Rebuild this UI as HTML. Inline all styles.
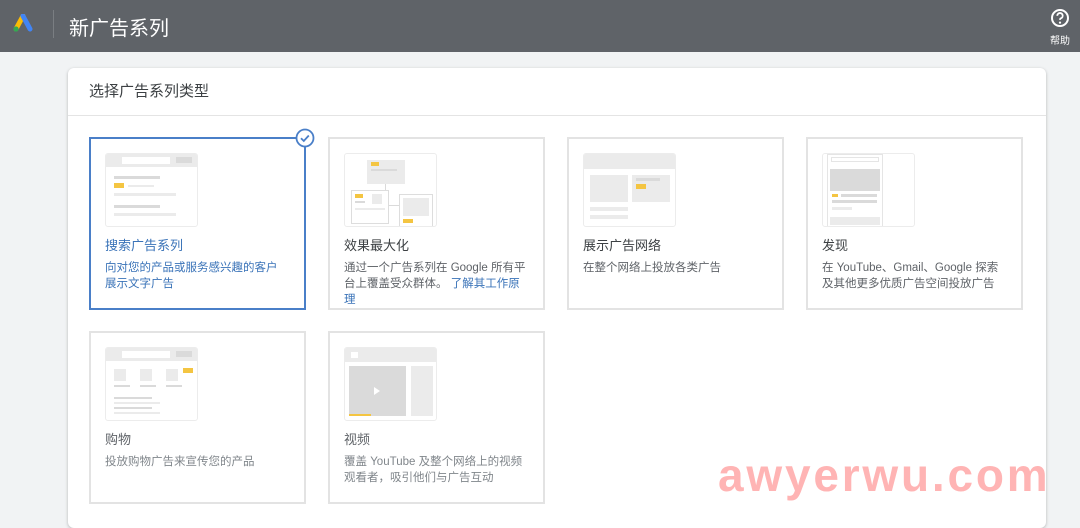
<!DOCTYPE html>
<html><head><meta charset="utf-8"><style>
*{margin:0;padding:0;box-sizing:border-box}
body{width:1080px;height:510px;overflow:hidden;background:#f1f3f4;font-family:"Liberation Sans","Noto Sans CJK SC",sans-serif;position:relative}
.hdr{position:absolute;left:0;top:0;width:1080px;height:52px;background:#5f6368}
.hdr .sep{position:absolute;left:53px;top:10px;width:1px;height:28px;background:#7a7e82}
.hdr .t{position:absolute;left:69px;top:12px;font-size:20px;color:#fff}
.help{position:absolute;left:1049px;top:8px;width:22px;text-align:center;color:#fff;font-size:10px}
.main{position:absolute;left:68px;top:68px;width:978px;height:460px;background:#fff;border-radius:6px;box-shadow:0 1px 3px rgba(0,0,0,.25)}
.main .h{position:absolute;left:21px;top:12px;font-size:15px;color:#3c4043}
.main .div{position:absolute;left:0;top:47px;width:100%;height:1px;background:#e4e4e4}
.c{position:absolute;width:217px;height:173px;border:2px solid #e3e3e3;background:#fff}
.c.sel{border-color:#4a7fc8}
.pv{position:absolute;left:14px;top:14px;width:93px;height:74px;border:1px solid #ececec;border-radius:3px;background:#fff;overflow:hidden}
.pv div{position:absolute}
.ct{position:absolute;left:14px;top:96px;font-size:13px;color:#3c4043}
.cd{position:absolute;left:14px;top:121px;width:182px;font-size:11.5px;line-height:16px;color:#5f6368}
.g{background:#dadada}.l{background:#ebebeb}.y{background:#f4c542}
.wm{position:absolute;left:718px;top:448px;font-size:46px;font-weight:bold;color:#ffb0b0;letter-spacing:2.8px;opacity:.95}
</style></head><body>
<div class="hdr">
<svg style="position:absolute;left:12px;top:14px" width="22" height="20" viewBox="0 0 22 20"><path d="M11 2 L4 15" stroke="#fbbc04" stroke-width="5" stroke-linecap="round"/><path d="M11 2 L18 15" stroke="#4285f4" stroke-width="5" stroke-linecap="round"/><circle cx="4" cy="15" r="2.6" fill="#34a853"/></svg>
<div class="sep"></div><div class="t">新广告系列</div>
<div class="help"><svg width="20" height="20" viewBox="0 0 20 20"><circle cx="10" cy="10" r="8" fill="none" stroke="#fff" stroke-width="2"/><path d="M7.3 7.8a2.7 2.7 0 1 1 3.6 2.5c-.7.3-.9.8-.9 1.6" fill="none" stroke="#fff" stroke-width="1.8"/><circle cx="10" cy="14.6" r="1.1" fill="#fff"/></svg><div style="margin-top:1px">帮助</div></div>
</div>
<div class="main"><div class="h">选择广告系列类型</div><div class="div"></div></div>

<div class="c sel" style="left:89px;top:137px">
<div class="pv"><div class="l" style="left:0;top:0;width:93px;height:13px"></div><div style="left:16px;top:3px;width:48px;height:7px;background:#fff"></div><div class="g" style="left:70px;top:3px;width:16px;height:6px"></div>
<div class="g" style="left:8px;top:22px;width:46px;height:3px"></div><div class="y" style="left:8px;top:29px;width:10px;height:5px"></div><div class="l" style="left:22px;top:31px;width:26px;height:2px"></div><div class="l" style="left:8px;top:39px;width:62px;height:3px"></div><div class="g" style="left:8px;top:51px;width:46px;height:3px"></div><div class="l" style="left:8px;top:59px;width:62px;height:3px"></div></div>
<div class="ct" style="color:#3a73b8">搜索广告系列</div>
<div class="cd" style="color:#3a73b8">向对您的产品或服务感兴趣的客户展示文字广告</div>
</div>
<svg style="position:absolute;left:295px;top:128px" width="20" height="20" viewBox="0 0 20 20"><circle cx="10" cy="10" r="8.5" fill="#fff" stroke="#4a7fc8" stroke-width="1.8"/><path d="M6 10.2l2.8 2.8 5-5.5" fill="none" stroke="#4a7fc8" stroke-width="1.8"/></svg>

<div class="c" style="left:328px;top:137px">
<div class="pv"><div class="l" style="left:22px;top:6px;width:38px;height:24px"></div><div class="y" style="left:26px;top:8px;width:8px;height:4px"></div><div class="g" style="left:26px;top:15px;width:26px;height:2px"></div><div class="g" style="left:40px;top:30px;width:1px;height:6px"></div>
<div style="left:6px;top:36px;width:38px;height:34px;border:1px solid #ddd"></div><div class="y" style="left:10px;top:40px;width:8px;height:4px"></div><div class="g" style="left:10px;top:47px;width:10px;height:2px"></div><div class="l" style="left:27px;top:40px;width:10px;height:10px"></div><div class="l" style="left:10px;top:54px;width:30px;height:2px"></div>
<div style="left:54px;top:40px;width:34px;height:34px;border:1px solid #ddd"></div><div class="l" style="left:58px;top:44px;width:26px;height:18px"></div><div class="y" style="left:58px;top:65px;width:10px;height:4px"></div><div class="g" style="left:44px;top:51px;width:10px;height:1px"></div></div>
<div class="ct">效果最大化</div>
<div class="cd">通过一个广告系列在 Google 所有平台上覆盖受众群体。 <span style="color:#3a73b8">了解其工作原理</span></div>
</div>

<div class="c" style="left:567px;top:137px">
<div class="pv"><div class="l" style="left:0;top:0;width:93px;height:15px"></div><div class="l" style="left:6px;top:21px;width:38px;height:27px"></div><div class="l" style="left:48px;top:21px;width:38px;height:27px"></div><div class="g" style="left:52px;top:24px;width:24px;height:3px"></div><div class="y" style="left:52px;top:30px;width:10px;height:5px"></div><div class="l" style="left:6px;top:53px;width:38px;height:4px"></div><div class="l" style="left:6px;top:61px;width:38px;height:4px"></div></div>
<div class="ct">展示广告网络</div>
<div class="cd">在整个网络上投放各类广告</div>
</div>

<div class="c" style="left:806px;top:137px">
<div class="pv"><div style="left:4px;top:0;width:56px;height:74px;border:1px solid #e5e5e5"></div><div style="left:8px;top:3px;width:48px;height:5px;border:1px solid #e5e5e5"></div><div class="g" style="left:7px;top:15px;width:50px;height:22px"></div><div class="y" style="left:9px;top:40px;width:6px;height:3px"></div><div class="g" style="left:18px;top:40px;width:36px;height:3px"></div><div class="g" style="left:9px;top:46px;width:45px;height:3px"></div><div class="l" style="left:9px;top:53px;width:20px;height:3px"></div><div class="l" style="left:7px;top:63px;width:50px;height:8px"></div></div>
<div class="ct">发现</div>
<div class="cd">在 YouTube、Gmail、Google 探索及其他更多优质广告空间投放广告</div>
</div>

<div class="c" style="left:89px;top:331px">
<div class="pv"><div class="l" style="left:0;top:0;width:93px;height:13px"></div><div style="left:16px;top:3px;width:48px;height:7px;background:#fff"></div><div class="g" style="left:70px;top:3px;width:16px;height:6px"></div>
<div class="y" style="left:77px;top:20px;width:10px;height:5px"></div><div class="l" style="left:8px;top:21px;width:12px;height:12px"></div><div class="l" style="left:34px;top:21px;width:12px;height:12px"></div><div class="l" style="left:60px;top:21px;width:12px;height:12px"></div><div class="g" style="left:8px;top:37px;width:16px;height:2px"></div><div class="g" style="left:34px;top:37px;width:16px;height:2px"></div><div class="g" style="left:60px;top:37px;width:16px;height:2px"></div><div class="g" style="left:8px;top:49px;width:38px;height:2px"></div><div class="l" style="left:8px;top:54px;width:46px;height:2px"></div><div class="g" style="left:8px;top:59px;width:38px;height:2px"></div><div class="l" style="left:8px;top:64px;width:46px;height:2px"></div></div>
<div class="ct" style="color:#5f6368">购物</div>
<div class="cd" style="color:#80868b">投放购物广告来宣传您的产品</div>
</div>

<div class="c" style="left:328px;top:331px">
<div class="pv"><div class="l" style="left:0;top:0;width:93px;height:14px"></div><div style="left:6px;top:4px;width:7px;height:6px;background:#fff"></div><div class="g" style="left:4px;top:18px;width:57px;height:50px"></div><div class="y" style="left:4px;top:66px;width:22px;height:2px"></div><div style="left:29px;top:39px;width:0;height:0;border-left:6px solid #fff;border-top:4px solid transparent;border-bottom:4px solid transparent"></div><div class="l" style="left:66px;top:18px;width:22px;height:50px"></div></div>
<div class="ct" style="color:#5f6368">视频</div>
<div class="cd" style="color:#80868b">覆盖 YouTube 及整个网络上的视频观看者，吸引他们与广告互动</div>
</div>

<div class="wm">awyerwu.com</div>
</body></html>
